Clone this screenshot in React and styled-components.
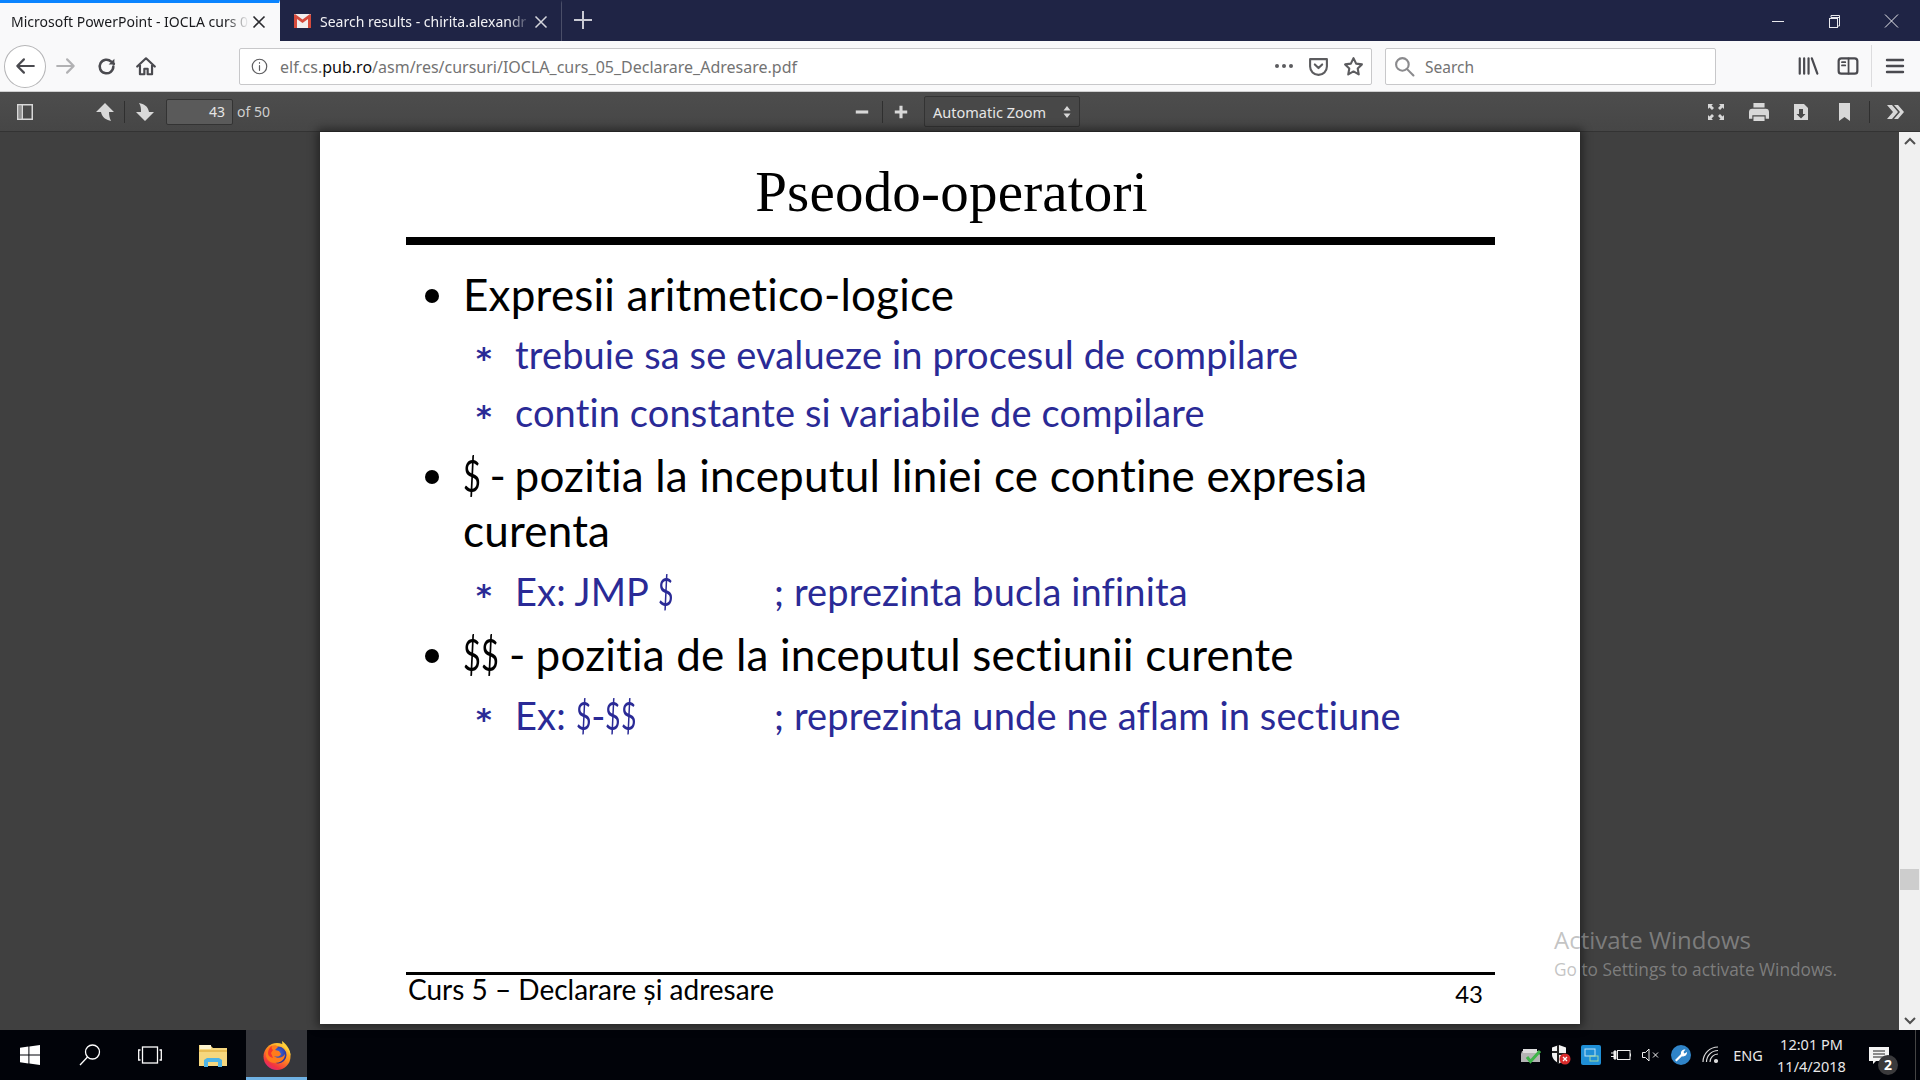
import React from 'react';
import styled, { createGlobalStyle } from 'styled-components';

const GlobalStyle = createGlobalStyle`
  html, body { margin: 0; padding: 0; background: #000; overflow: hidden; }
  * { box-sizing: border-box; }
`;

const uiFont = `"Noto Sans", "Open Sans", sans-serif`;
const slideFont = `Lato, "Noto Sans", sans-serif`;

const Screen = styled.div`
  width: 1920px;
  height: 1080px;
  display: flex;
  flex-direction: column;
  font-family: ${uiFont};
  overflow: hidden;
`;

/* tab strip */
const TabStrip = styled.div`
  height: 41px;
  flex: none;
  display: flex;
  background: #1f2445;
`;
const Tab = styled.div`
  width: ${(p) => (p.$active ? 280 : 282)}px;
  display: flex;
  align-items: center;
  padding-left: ${(p) => (p.$active ? 11 : 14)}px;
  padding-bottom: 2px;
  background: ${(p) => (p.$active ? '#f9f9fa' : 'transparent')};
  border-top: 3px solid ${(p) => (p.$active ? '#0a84ff' : 'transparent')};
  border-right: 1px solid ${(p) => (p.$active ? 'transparent' : '#4a4e68')};
  color: ${(p) => (p.$active ? '#18191c' : '#f2f2f5')};
  font-size: 14px;
`;
const TabTitle = styled.span`
  width: ${(p) => p.$w}px;
  margin-left: ${(p) => p.$ml || 0}px;
  white-space: nowrap;
  -webkit-mask-image: linear-gradient(90deg, #000 90%, transparent);
  mask-image: linear-gradient(90deg, #000 90%, transparent);
`;
const TabClose = styled.svg`
  width: 14px;
  height: 14px;
  margin-left: ${(p) => p.$ml}px;
  margin-top: 1px;
  flex: none;
`;
const NewTab = styled.svg`
  width: 18px;
  height: 18px;
  margin: 11px 0 0 12px;
`;
const WindowButtons = styled.div`
  margin-left: auto;
  display: flex;
  align-items: center;
  height: 41px;
`;
const WindowButton = styled.svg`
  width: 57px;
  height: 14px;
`;

/* navigation bar */
const NavBar = styled.div`
  height: 51px;
  flex: none;
  display: flex;
  align-items: center;
  background: #f9f9fa;
  border-bottom: 1px solid #cfcfd0;
  padding-left: 4px;
`;
const BackCircle = styled.div`
  width: 42px;
  height: 43px;
  flex: none;
  border: 1px solid #b5b5b7;
  border-radius: 50%;
  background: #fff;
  display: flex;
  align-items: center;
  justify-content: center;
`;
const NavSlot = styled.div`
  width: ${(p) => p.$w}px;
  margin-left: ${(p) => p.$ml || 0}px;
  flex: none;
  display: flex;
  align-items: center;
  justify-content: center;
`;
const UrlBox = styled.div`
  width: ${(p) => p.$w}px;
  height: 37px;
  margin-left: ${(p) => p.$ml}px;
  flex: none;
  display: flex;
  align-items: center;
  background: #fff;
  border: 1px solid #c8c8ca;
  border-radius: 2px;
`;
const UrlText = styled.div`
  margin-left: 6px;
  padding-top: 1px;
  font-size: 16px;
  color: #737373;
  flex: 1;
  white-space: nowrap;
  b { font-weight: 400; color: #0c0c0d; }
`;
const SearchText = styled.div`
  margin-left: 3px;
  padding-top: 1px;
  font-size: 15.500px;
  color: #737373;
`;
const NavDivider = styled.div`
  width: 1px;
  height: 42px;
  background: #dcdcde;
  margin-left: ${(p) => p.$ml}px;
`;

/* pdf toolbar */
const PdfBar = styled.div`
  height: 40px;
  flex: none;
  display: flex;
  align-items: center;
  background: linear-gradient(#4d4d4d, #464646);
  border-bottom: 1px solid #333;
  color: #d9d9d9;
  font-size: 14px;
`;
const PdfSlot = styled.div`
  width: ${(p) => p.$w}px;
  margin-left: ${(p) => p.$ml || 0}px;
  flex: none;
  display: flex;
  align-items: center;
  justify-content: center;
`;
const PdfDivider = styled.div`
  width: 1px;
  height: 22px;
  margin-left: ${(p) => p.$ml || 0}px;
  background: #2f2f2f;
  flex: none;
`;
const PageInput = styled.div`
  width: 67px;
  height: 26px;
  margin-left: 2px;
  padding-right: 7px;
  flex: none;
  text-align: right;
  line-height: 24px;
  color: #e6e6e6;
  background: #5a5a5a;
  border: 1px solid #333;
  border-radius: 2px;
`;
const PageTotal = styled.div`
  margin-left: 4px;
  width: 50px;
  color: #cfcfcf;
`;
const ZoomSelect = styled.div`
  width: 156px;
  height: 31px;
  margin-left: 5px;
  padding: 0 8px;
  flex: none;
  display: flex;
  align-items: center;
  justify-content: space-between;
  font-size: 14.500px;
  color: #e6e6e6;
  background: #484848;
  border: 1px solid #333;
  border-radius: 2px;
`;

/* viewer */
const Viewer = styled.div`
  flex: 1;
  min-height: 0;
  display: flex;
  position: relative;
  background: #404040;
`;
const PageArea = styled.div`
  flex: 1;
  padding-left: 320px;
`;
const Page = styled.div`
  width: 1260px;
  height: 892px;
  padding: 0 85px 0 86px;
  display: flex;
  flex-direction: column;
  background: #fff;
  box-shadow: 0 0 9px 3px rgba(0, 0, 0, 0.45);
`;
const SlideTitle = styled.h1`
  height: 105px;
  margin: 0;
  padding: 28px 0 0 2px;
  text-align: center;
  font-family: "Liberation Serif", serif;
  font-weight: 400;
  font-size: 57px;
  letter-spacing: 0.2px;
  line-height: 64px;
  color: #000;
`;
const TitleRule = styled.div`
  height: 8px;
  flex: none;
  background: #000;
`;
const Bullets = styled.div`
  display: flex;
  flex-direction: column;
  margin-top: 22px;
  font-variant-ligatures: none;
`;
const MainItem = styled.div`
  display: flex;
  margin-top: ${(p) => p.$mt || 0}px;
  padding-left: 19px;
  font-family: ${slideFont};
  font-size: 44px;
  letter-spacing: 0.2px;
  line-height: 55px;
  color: #000;
`;
const Dot = styled.span`
  width: 14px;
  height: 14px;
  flex: none;
  margin-top: 22px;
  border-radius: 50%;
  background: #000;
`;
const MainText = styled.div`
  margin-left: 24px;
  width: 960px;
`;
const Lead = styled.span`
  word-spacing: ${(p) => p.$ws}px;
`;
const SubItem = styled.div`
  display: flex;
  margin-top: ${(p) => p.$mt || 0}px;
  padding-left: 69px;
  font-family: ${slideFont};
  font-size: 38px;
  letter-spacing: 0.13px;
  line-height: 48px;
  color: #2a2a96;
`;
const Star = styled.span`
  width: 40px;
  height: 48px;
  padding: 5px 0 0 1px;
  flex: none;
  font-family: "DejaVu Sans", sans-serif;
  font-weight: 700;
  font-size: 30px;
`;
const Code = styled.span`
  width: ${(p) => p.$w}px;
  flex: none;
`;
const Sign = styled.span`
  display: inline-block;
  letter-spacing: -0.17em;
  transform: scaleX(0.7);
  transform-origin: left center;
`;
const Footer = styled.div`
  margin-top: auto;
  height: 52px;
  flex: none;
  border-top: 3px solid #000;
  display: flex;
  justify-content: space-between;
  font-family: ${slideFont};
  color: #000;
  padding: 0 12px 0 2px;
`;
const FooterNote = styled.div`
  font-size: 28px;
  line-height: 28px;
`;
const FooterNum = styled.div`
  font-size: 24px;
  line-height: 30px;
  padding-top: 4px;
`;
const Scrollbar = styled.div`
  width: 21px;
  flex: none;
  background: #f0f0f0;
  position: relative;
  display: flex;
  flex-direction: column;
  justify-content: space-between;
  align-items: center;
  padding: 5px 0;
`;
const Thumb = styled.div`
  position: absolute;
  left: 1px;
  top: 737px;
  width: 19px;
  height: 21px;
  background: #cdcdcd;
`;
const Activation = styled.div`
  position: absolute;
  left: 1554px;
  top: 791px;
  color: rgba(162, 162, 162, 0.634);
  font-family: "Open Sans", sans-serif;
`;
const ActivationTitle = styled.div`
  font-size: 24px;
  line-height: 34px;
`;
const ActivationHint = styled.div`
  font-size: 17.300px;
  line-height: 22px;
  margin-top: 2px;
`;

/* taskbar */
const Taskbar = styled.div`
  height: 50px;
  flex: none;
  display: flex;
  align-items: center;
  background: #010309;
  color: #e8e8e8;
`;
const TaskSlot = styled.div`
  width: ${(p) => p.$w}px;
  height: 50px;
  flex: none;
  display: flex;
  align-items: center;
  justify-content: center;
`;
const ActiveTask = styled(TaskSlot)`
  background: #36373c;
  border-bottom: 3px solid #6fb1e3;
  padding-top: 3px;
`;
const Tray = styled.div`
  margin-left: auto;
  padding-right: 4px;
  display: flex;
  align-items: center;
  height: 50px;
`;
const TrayIcon = styled.div`
  width: 30px;
  flex: none;
  display: flex;
  align-items: center;
  justify-content: center;
`;
const Lang = styled.div`
  width: 44px;
  text-align: center;
  font-size: 14.500px;
`;
const Clock = styled.div`
  width: 83px;
  text-align: center;
  font-size: 14.500px;
  line-height: 22px;
`;
const Notes = styled.div`
  position: relative;
  width: 63px;
  height: 50px;
  display: flex;
  align-items: center;
  padding-left: 16px;
  border-right: 1px solid #444;
`;
const NoteBadge = styled.div`
  position: absolute;
  left: 25px;
  top: 25px;
  width: 20px;
  height: 20px;
  border-radius: 50%;
  background: #3a3a3c;
  color: #fff;
  font-size: 14px;
  font-weight: 700;
  line-height: 20px;
  text-align: center;
`;

const Stroke = ({ size = 20, color = '#4a4a4f', width = 2, children }) => (
  <svg width={size} height={size} viewBox="0 0 20 20" fill="none" stroke={color} strokeWidth={width} strokeLinecap="round" strokeLinejoin="round">
    {children}
  </svg>
);
const Fill = ({ w = 18, h = 18, color = '#d8d8d8', children }) => (
  <svg width={w} height={h} viewBox="0 0 18 18" fill={color}>
    {children}
  </svg>
);

const GmailIcon = () => (
  <svg width="17" height="14" viewBox="0 0 17 14" style={{ flex: 'none' }}>
    <rect width="17" height="14" rx="1" fill="#f1eeee" />
    <path d="M0 1v13h3V5l5.500 4L14 5v9h3V1l-1-1-7.500 5.500L1 0z" fill="#d54b3d" />
  </svg>
);

const FirefoxIcon = () => (
  <svg width="30" height="30" viewBox="0 0 30 30">
    <defs>
      <linearGradient id="ffBody" x1="0.8" y1="0" x2="0.2" y2="1">
        <stop offset="0" stopColor="#ffd53a" />
        <stop offset="0.45" stopColor="#ff8a1f" />
        <stop offset="0.8" stopColor="#f2353f" />
        <stop offset="1" stopColor="#d7218f" />
      </linearGradient>
      <radialGradient id="ffGlobe" cx="0.5" cy="0.4" r="0.6">
        <stop offset="0" stopColor="#3f6fe0" />
        <stop offset="1" stopColor="#2b2a8f" />
      </radialGradient>
    </defs>
    <circle cx="15" cy="16.500" r="13.500" fill="url(#ffBody)" />
    <path d="M20 1c3 2 9 8 8.500 15-1.500-5-5-8-8-10z" fill="#ffcf3a" />
    <circle cx="16" cy="15" r="8.500" fill="url(#ffGlobe)" />
    <path d="M9 6c3-1 6-1 7 1l-3 3 4 1 2 3c-1 3-5 3-7 2 3 3 9 2 11-2 0 6-5 9-10 9-6 0-10-5-9-10 0-3 2-6 5-7z" fill="#ff7b1c" />
    <path d="M6 13c0-3 2-6 4-7-1 2 0 3 1 4l-2 3 2 5c-3-1-5-2-5-5z" fill="#f5362e" />
  </svg>
);

const FolderIcon = () => (
  <svg width="28" height="23" viewBox="0 0 28 23">
    <path d="M0 1h11l3 3h14v18H0z" fill="#f6d77e" />
    <rect x="1" y="1" width="11" height="4" fill="#fbf3d0" />
    <path d="M0 6h28v2H0z" fill="#e8bc54" />
    <path d="M5 23v-7l3-2h12l3 2v7h-4v-5H9v5z" fill="#4fb4e6" />
  </svg>
);

const App = () => {
  return (
    <Screen>
      <GlobalStyle />
      <TabStrip>
        <Tab $active>
          <TabTitle $w={238}>Microsoft PowerPoint - IOCLA curs 0</TabTitle>
          <TabClose $ml={3} viewBox="0 0 14 14" stroke="#2a2a2e" strokeWidth="1.6">
            <path d="M1.500 1.500l11 11M12.500 1.500l-11 11" />
          </TabClose>
        </Tab>
        <Tab>
          <GmailIcon />
          <TabTitle $w={210} $ml={9}>Search results - chirita.alexandr</TabTitle>
          <TabClose $ml={4} viewBox="0 0 14 14" stroke="#d5d6dd" strokeWidth="1.5">
            <path d="M1.500 1.500l11 11M12.500 1.500l-11 11" />
          </TabClose>
        </Tab>
        <NewTab viewBox="0 0 18 18" stroke="#c9cad4" strokeWidth="2">
          <path d="M9 0v18M0 9h18" />
        </NewTab>
        <WindowButtons>
          <WindowButton viewBox="0 0 57 14" stroke="#e8e8ec" strokeWidth="1" fill="none">
            <path d="M23 7.500h12" />
          </WindowButton>
          <WindowButton viewBox="0 0 57 14" stroke="#e8e8ec" strokeWidth="1" fill="none">
            <path d="M24 3.500h8.500v8.500h-2.500M24 3.500V1.500h8.500v8.500" transform="translate(1 0)" />
            <rect x="23.500" y="4.500" width="8" height="9" />
          </WindowButton>
          <WindowButton viewBox="0 0 57 14" stroke="#e8e8ec" strokeWidth="1" fill="none">
            <path d="M22 0.500l13 13M35 0.500l-13 13" />
          </WindowButton>
        </WindowButtons>
      </TabStrip>

      <NavBar>
        <BackCircle>
          <Stroke size={22}>
            <path d="M18 10H3M9 4l-6 6 6 6" />
          </Stroke>
        </BackCircle>
        <NavSlot $w={22} $ml={9}>
          <Stroke size={22} color="#b1b1b3">
            <path d="M2 10h15M11 4l6 6-6 6" />
          </Stroke>
        </NavSlot>
        <NavSlot $w={22} $ml={18}>
          <Stroke size={21} width={2.4}>
            <path d="M16.500 10a6.500 6.500 0 1 1-2-4.700L17 7.500" />
            <path d="M17.500 2.500v5.500H12" fill="#4a4a4f" stroke="none" />
          </Stroke>
        </NavSlot>
        <NavSlot $w={22} $ml={18}>
          <Stroke size={22}>
            <path d="M2 10.500L10 3l8 7.500M4.500 9v8.500h4v-5h3v5h4V9" />
          </Stroke>
        </NavSlot>
        <UrlBox $w={1133} $ml={82}>
          <NavSlot $w={30} $ml={4}>
            <Stroke size={17} width={1.4} color="#5c5c5f">
              <circle cx="10" cy="10" r="8.500" />
              <path d="M10 9v5.500M10 5.500v.6" />
            </Stroke>
          </NavSlot>
          <UrlText>
            elf.cs.<b>pub.ro</b>/asm/res/cursuri/IOCLA_curs_05_Declarare_Adresare.pdf
          </UrlText>
          <NavSlot $w={28}>
            <svg width="20" height="6" viewBox="0 0 20 6" fill="#5c5c5f">
              <circle cx="3" cy="3" r="2" />
              <circle cx="10" cy="3" r="2" />
              <circle cx="17" cy="3" r="2" />
            </svg>
          </NavSlot>
          <NavSlot $w={22} $ml={9}>
            <Stroke size={21} color="#5c5c5f">
              <path d="M2 3h16v7a8 8 0 0 1-16 0z" />
              <path d="M6.500 8l3.500 3.500L13.500 8" />
            </Stroke>
          </NavSlot>
          <NavSlot $w={24} $ml={12}>
            <Stroke size={21} color="#5c5c5f">
              <path d="M10 2l2.500 5.300 5.500.7-4 3.900 1 5.600-5-2.800-5 2.800 1-5.600-4-3.900 5.500-.7z" />
            </Stroke>
          </NavSlot>
          <NavSlot $w={6} />
        </UrlBox>
        <UrlBox $w={331} $ml={13}>
          <NavSlot $w={36}>
            <Stroke size={21} color="#8a8a8d">
              <circle cx="8" cy="8" r="6" />
              <path d="M12.500 12.500L18.500 18.500" />
            </Stroke>
          </NavSlot>
          <SearchText>Search</SearchText>
        </UrlBox>
        <NavSlot $w={22} $ml={81}>
          <Stroke size={22}>
            <path d="M2.500 3v14M6.500 3v14M10.500 3v14M13.500 3l5 14" />
          </Stroke>
        </NavSlot>
        <NavSlot $w={22} $ml={18}>
          <Stroke size={22}>
            <rect x="1.500" y="3" width="17" height="14" rx="2.500" />
            <path d="M10.500 3v14M4.500 6.500h3M4.500 9.500h3" strokeWidth="1.600" />
          </Stroke>
        </NavSlot>
        <NavDivider $ml={12} />
        <NavSlot $w={22} $ml={12}>
          <Stroke size={20} width={2.400}>
            <path d="M2 4h16M2 10h16M2 16h16" />
          </Stroke>
        </NavSlot>
      </NavBar>

      <PdfBar>
        <PdfSlot $w={18} $ml={16}>
          <Fill>
            <path d="M1 1h16v16H1zM2.500 2.500v13h3v-13zM7 2.500v13h8.500v-13z" fillRule="evenodd" />
            <rect x="2.500" y="2.500" width="3" height="13" opacity="0.5" />
          </Fill>
        </PdfSlot>
        <PdfSlot $w={22} $ml={60}>
          <Fill>
            <path d="M9 0l9 9h-5c0 3 .5 6 2 9-4-1-9-3-10-9H0z" />
          </Fill>
        </PdfSlot>
        <PdfDivider $ml={8} />
        <PdfSlot $w={39}>
          <Fill>
            <path d="M9 18L0 9h5C5 6 5 3 3 0c5 1 9 3 10 9h5z" />
          </Fill>
        </PdfSlot>
        <PageInput>43</PageInput>
        <PageTotal>of 50</PageTotal>
        <PdfSlot $w={20} $ml={565}>
          <Fill w={14} h={14}>
            <rect x="1" y="7" width="16" height="4" />
          </Fill>
        </PdfSlot>
        <PdfDivider $ml={10} />
        <PdfSlot $w={36}>
          <Fill w={14} h={14}>
            <path d="M7 1h4v6h6v4h-6v6H7v-6H1V7h6z" />
          </Fill>
        </PdfSlot>
        <ZoomSelect>
          Automatic Zoom
          <svg width="8" height="12" viewBox="0 0 8 12" fill="#d8d8d8">
            <path d="M4 0l3.500 4.500h-7zM4 12L.5 7.500h7z" />
          </svg>
        </ZoomSelect>
        <PdfSlot $w={20} $ml={626}>
          <Fill>
            <path d="M1 1h5l-1.500 1.500L7 5 5 7 2.500 4.500 1 6zM17 1v5l-1.500-1.500L13 7l-2-2 2.500-2.500L12 1zM1 17v-5l1.500 1.500L5 11l2 2-2.500 2.500L6 17zM17 17h-5l1.500-1.500L11 13l2-2 2.500 2.500L17 12z" />
          </Fill>
        </PdfSlot>
        <PdfSlot $w={24} $ml={21}>
          <Fill w={20} h={20}>
            <path d="M4 1h10v4H4zM3 6h12a3 3 0 0 1 3 3v6h-3v-3H3v3H0V9a3 3 0 0 1 3-3zM4 13h10v4H4z" />
          </Fill>
        </PdfSlot>
        <PdfSlot $w={20} $ml={20}>
          <Fill w={18} h={20}>
            <path d="M2 1h10l4 4v12H2zM7 6v5H4.500L9 15.500 13.500 11H11V6z" fillRule="evenodd" />
          </Fill>
        </PdfSlot>
        <PdfSlot $w={18} $ml={24}>
          <svg width="11" height="18" viewBox="0 0 11 18" fill="#d8d8d8">
            <path d="M0 0h11v18l-5.500-4L0 18z" />
          </svg>
        </PdfSlot>
        <PdfDivider $ml={16} />
        <PdfSlot $w={20} $ml={15}>
          <Fill>
            <path d="M1 2h5l6 7-6 7H1l6-7zM8 2h4l6 7-6 7H8l6-7z" />
          </Fill>
        </PdfSlot>
      </PdfBar>

      <Viewer>
        <PageArea>
          <Page>
            <SlideTitle>Pseodo-operatori</SlideTitle>
            <TitleRule />
            <Bullets>
              <MainItem>
                <Dot />
                <MainText>Expresii aritmetico-logice</MainText>
              </MainItem>
              <SubItem $mt={8}>
                <Star>*</Star>
                trebuie sa se evalueze in procesul de compilare
              </SubItem>
              <SubItem $mt={10}>
                <Star>*</Star>
                contin constante si variabile de compilare
              </SubItem>
              <MainItem $mt={12}>
                <Dot />
                <MainText><Lead $ws={-3}><Sign>$</Sign> - </Lead>pozitia la inceputul liniei ce contine expresia curenta</MainText>
              </MainItem>
              <SubItem $mt={9}>
                <Star>*</Star>
                <Code $w={259}>Ex: JMP <Sign>$</Sign></Code>; reprezinta bucla infinita
              </SubItem>
              <MainItem $mt={12}>
                <Dot />
                <MainText><Lead $ws={-1.5}><Sign>$</Sign><Sign>$</Sign> - </Lead>pozitia de la inceputul sectiunii curente</MainText>
              </MainItem>
              <SubItem $mt={9}>
                <Star>*</Star>
                <Code $w={259}>Ex: <Sign>$</Sign>-<Sign>$</Sign><Sign>$</Sign></Code>; reprezinta unde ne aflam in sectiune
              </SubItem>
            </Bullets>
            <Footer>
              <FooterNote>Curs 5 – Declarare și adresare</FooterNote>
              <FooterNum>43</FooterNum>
            </Footer>
          </Page>
        </PageArea>
        <Scrollbar>
          <svg width="12" height="8" viewBox="0 0 12 8" fill="none" stroke="#505050" strokeWidth="2">
            <path d="M1 7l5-5 5 5" />
          </svg>
          <Thumb />
          <svg width="12" height="8" viewBox="0 0 12 8" fill="none" stroke="#505050" strokeWidth="2">
            <path d="M1 1l5 5 5-5" />
          </svg>
        </Scrollbar>
        <Activation>
          <ActivationTitle>Activate Windows</ActivationTitle>
          <ActivationHint>Go to Settings to activate Windows.</ActivationHint>
        </Activation>
      </Viewer>

      <Taskbar>
        <TaskSlot $w={60}>
          <svg width="20" height="20" viewBox="0 0 20 20" fill="#fff">
            <path d="M0 2.800l8.400-1.200v8H0zM9.400 1.400L20 0v9.600H9.400zM0 10.600h8.400v7.900L0 17.300zM9.400 10.600H20V20L9.400 18.600z" />
          </svg>
        </TaskSlot>
        <TaskSlot $w={60}>
          <svg width="22" height="22" viewBox="0 0 22 22" fill="none" stroke="#fff" strokeWidth="1.300">
            <circle cx="13.500" cy="8" r="7" />
            <path d="M8.500 13L1 21" />
          </svg>
        </TaskSlot>
        <TaskSlot $w={60}>
          <svg width="24" height="18" viewBox="0 0 24 18" fill="none" stroke="#fff" strokeWidth="1.300">
            <rect x="4.500" y="1" width="15" height="16" />
            <path d="M2.500 4H.7v10h1.800M21.500 4h1.800v10h-1.800" />
          </svg>
        </TaskSlot>
        <TaskSlot $w={66}>
          <FolderIcon />
        </TaskSlot>
        <ActiveTask $w={61}>
          <FirefoxIcon />
        </ActiveTask>
        <Tray>
          <TrayIcon>
            <svg width="22" height="18" viewBox="0 0 22 18">
              <path d="M2 5h16l2 4v7H1V8z" fill="#b4b4b4" />
              <rect x="3" y="3" width="14" height="4" fill="#dcdcdc" />
              <path d="M7 11l3.500 4.500L20 5" fill="none" stroke="#3fb54a" strokeWidth="3" />
            </svg>
          </TrayIcon>
          <TrayIcon>
            <svg width="20" height="20" viewBox="0 0 20 20">
              <path d="M8 0l7 2.500v7c0 4-3 7-7 9-4-2-7-5-7-9v-7z" fill="#f2f2f2" />
              <path d="M8 0v8H1V6h5V0zM8 8h7v2H8v8.500H6V8z" fill="#222" />
              <circle cx="14" cy="14" r="5.500" fill="#d92b2b" />
              <path d="M12 12l4 4M16 12l-4 4" stroke="#fff" strokeWidth="1.300" />
            </svg>
          </TrayIcon>
          <TrayIcon>
            <svg width="20" height="20" viewBox="0 0 20 20">
              <rect width="20" height="20" rx="2" fill="#1f8fd6" />
              <rect x="4" y="4" width="10" height="7" fill="none" stroke="#bfe4f7" />
              <rect x="9" y="11" width="8" height="5" fill="none" stroke="#9fd7a0" />
            </svg>
          </TrayIcon>
          <TrayIcon>
            <svg width="20" height="14" viewBox="0 0 20 14" fill="none" stroke="#eee" strokeWidth="1">
              <rect x="6.500" y="2.500" width="12.500" height="9" />
              <path d="M19.500 5.500v3" />
              <path d="M0 5h3M0 8.500h3M3 3v8h2V3z" fill="#eee" />
            </svg>
          </TrayIcon>
          <TrayIcon>
            <svg width="19" height="14" viewBox="0 0 19 14" fill="none" stroke="#eee" strokeWidth="1">
              <path d="M.5 4.500h3L7 1v12L3.500 9.500h-3zM11 4.500l5 5M16 4.500l-5 5" />
            </svg>
          </TrayIcon>
          <TrayIcon>
            <svg width="20" height="20" viewBox="0 0 20 20">
              <circle cx="10" cy="10" r="10" fill="#2f84c8" />
              <path d="M4 15l6-6c-.6-2.500 1.500-5 4.500-4.500L12.500 7l1 1.500 2.500-1.500c.3 3-2.500 5-5 4.200L5.500 16.500z" fill="#fff" />
            </svg>
          </TrayIcon>
          <TrayIcon>
            <svg width="18" height="18" viewBox="0 0 18 18" fill="none" stroke="#ddd" strokeWidth="1.200">
              <path d="M1 16A15 15 0 0 1 16 1M4.500 16A11.500 11.500 0 0 1 16 4.500M8 16a8 8 0 0 1 8-8" />
              <circle cx="14" cy="15" r="1.500" fill="#ddd" />
            </svg>
          </TrayIcon>
          <Lang>ENG</Lang>
          <Clock>
            <div>12:01 PM</div>
            <div>11/4/2018</div>
          </Clock>
          <Notes>
            <svg width="20" height="17" viewBox="0 0 20 17">
              <path d="M0 0h20v14H7l-3 3v-3H0z" fill="#f4f4f4" />
              <path d="M4 4h12M4 7h12M4 10h12" stroke="#222" strokeWidth="1" />
            </svg>
            <NoteBadge>2</NoteBadge>
          </Notes>
        </Tray>
      </Taskbar>
    </Screen>
  );
};

export default App;
